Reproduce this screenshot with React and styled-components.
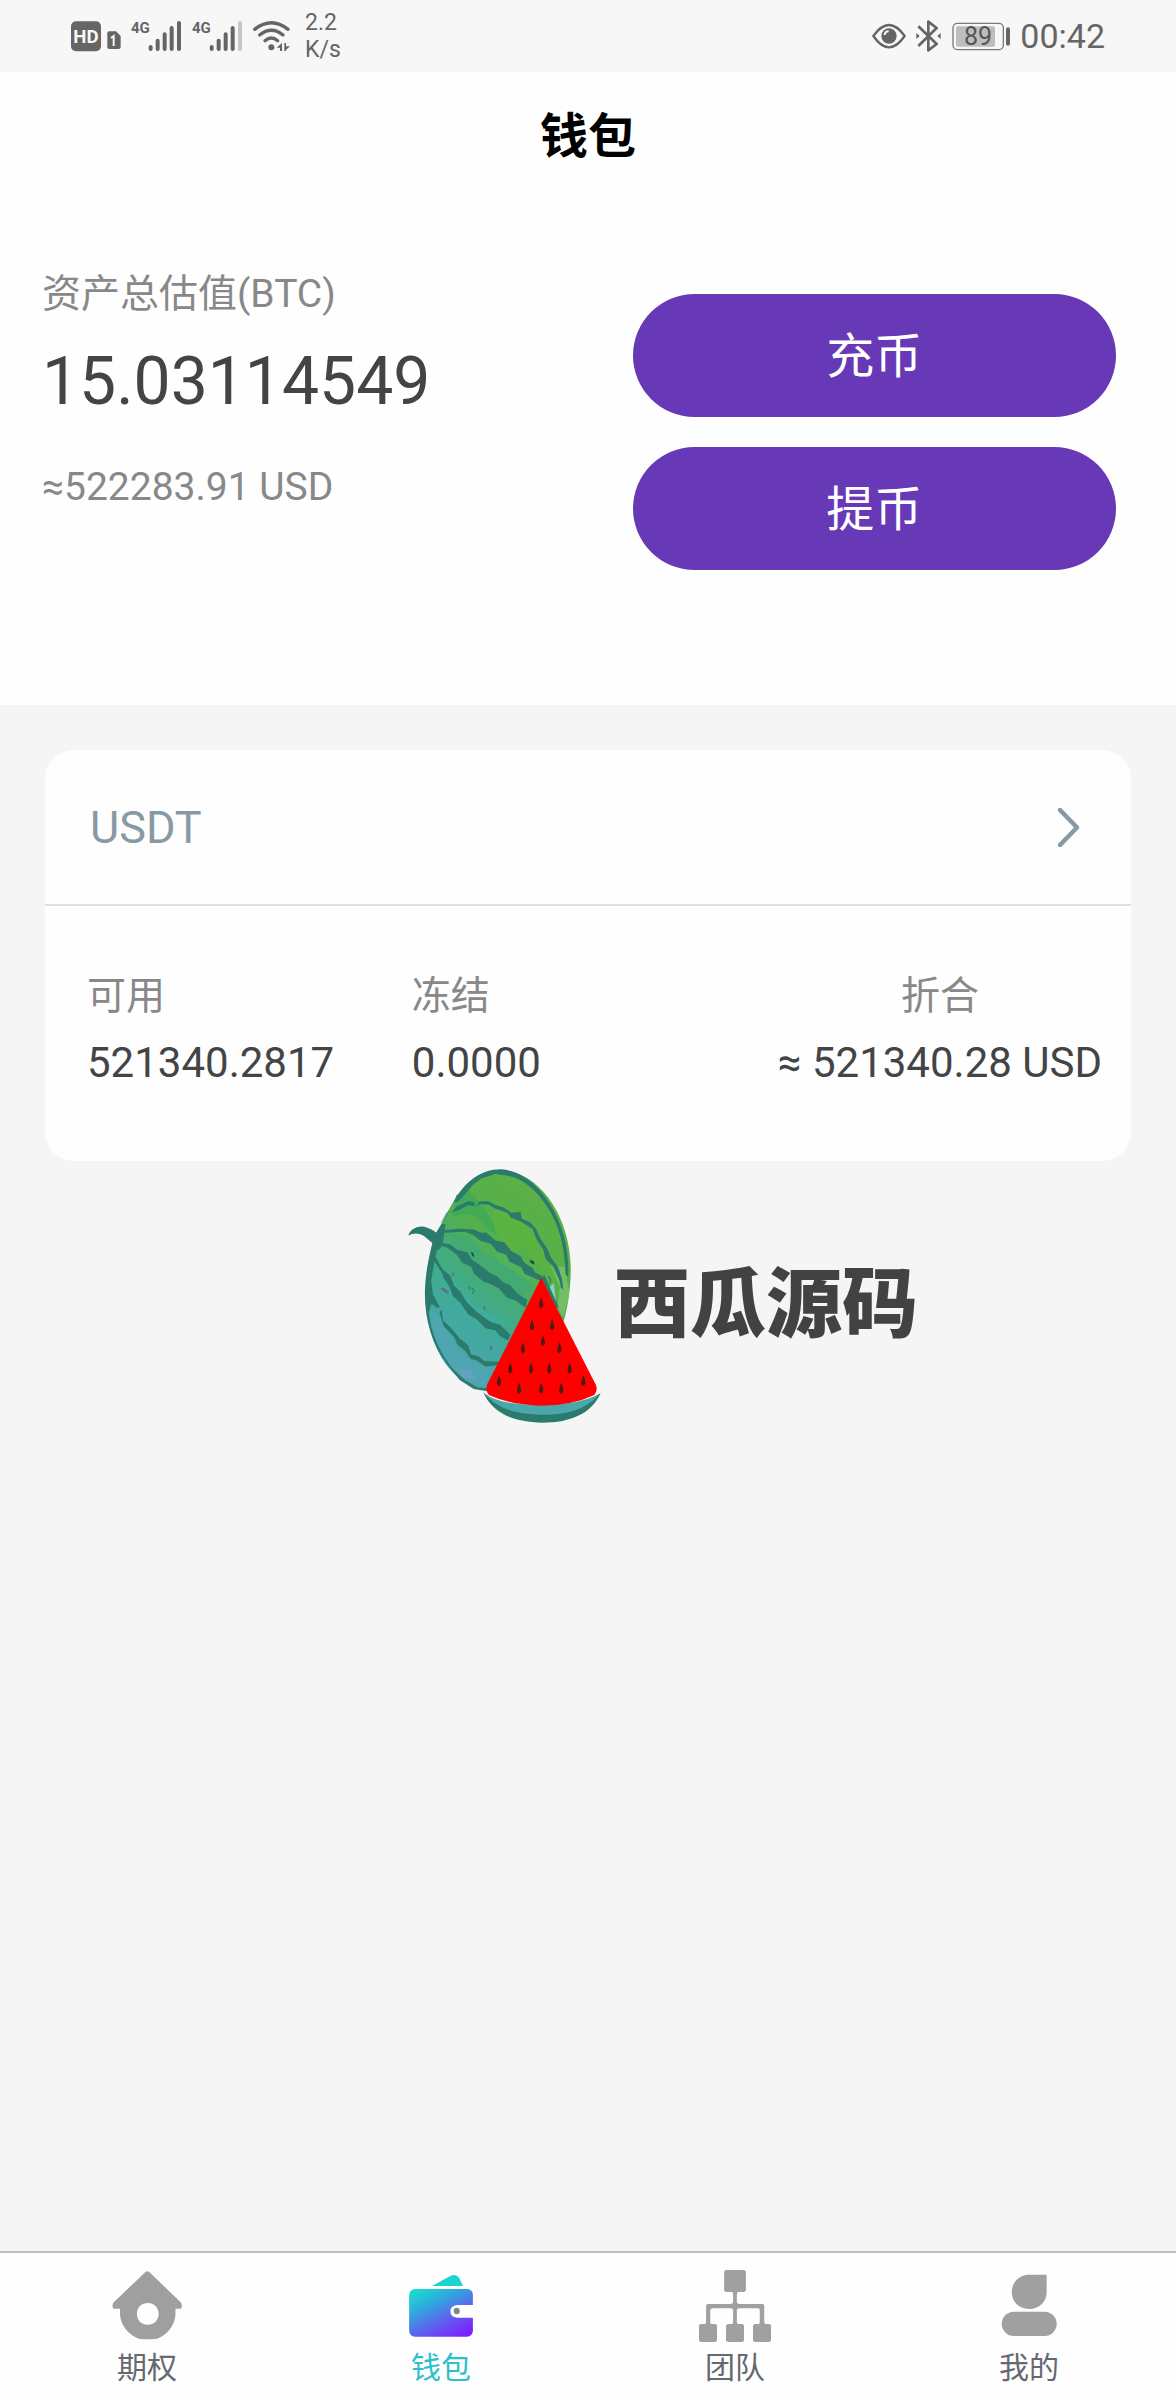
import React from "react";
import styled, { createGlobalStyle } from "styled-components";

const GlobalStyle = createGlobalStyle`
  * { box-sizing: border-box; }
  body {
    margin: 0;
    background: #f5f5f5;
    color: #434446;
    font-family: Roboto, "Noto Sans CJK SC", sans-serif;
  }
  h1, p, dl, dt, dd { margin: 0; }
  svg { display: block; flex: none; }
`;

const Page = styled.div`
  display: flex;
  flex-direction: column;
  min-height: 100vh;
`;

/* ---------- status bar ---------- */

const StatusBar = styled.div`
  display: flex;
  align-items: center;
  justify-content: space-between;
  height: 72px;
  padding: 0 71px;
  background: #f7f7f7;
  color: #656565;
`;

const StatusGroup = styled.div`
  display: flex;
  align-items: center;
  gap: ${(p) => p.$gap}px;
`;

const Speed = styled.div`
  padding-left: 5px;
  font-size: 23px;
  line-height: 27px;
`;

const Clock = styled.time`
  font-size: 34px;
  line-height: 40px;
`;

const StatusText = styled.text`
  font-family: Roboto, sans-serif;
  font-size: ${(p) => p.$size}px;
  font-weight: ${(p) => p.$weight || 400};
  text-anchor: middle;
`;

const HdIcon = () => (
  <svg width="30" height="32" viewBox="63 62 90 96" aria-label="HD">
    <rect x="63" y="66" width="90" height="90" rx="15" fill="#656565" />
    <StatusText x="108" y="131" $size="56" $weight="700" fill="#f7f7f7">HD</StatusText>
  </svg>
);

const SimIcon = () => (
  <svg width="14" height="32" viewBox="167 62 42 96" aria-label="SIM 1">
    <path d="M174 96H194L208 110V143Q208 149 202 149H174Q168 149 168 143V102Q168 96 174 96Z" fill="#656565" />
    <path d="M179 116L187 110V140" fill="none" stroke="#f7f7f7" strokeWidth="6" />
  </svg>
);

const SignalIcon = ({ weak }) => (
  <svg width="51" height="32" viewBox="244 60 153 96" aria-label="4G">
    <StatusText x="272" y="100" $size="45" $weight="700" fill="#656565">4G</StatusText>
    <g stroke="#656565" strokeWidth="12" strokeLinecap="round">
      <path d="M303 141V147M324 122V147M345 103V147M366 84V147" />
      <path d="M388 69V147" stroke={weak ? "#c6c6c6" : "#656565"} />
    </g>
  </svg>
);

const WifiIcon = () => (
  <svg width="37" height="32" viewBox="604 60 111 96" aria-label="Wi-Fi">
    <g fill="none" stroke="#656565" strokeWidth="10" strokeLinecap="round">
      <path d="M609 88Q659 49 709 88" />
      <path d="M624 105Q659 76 694 105" />
      <path d="M640 122Q659 106 678 122" />
    </g>
    <circle cx="659" cy="142" r="9" fill="#656565" />
    <path d="M675 143L691 129V153H685V143ZM698 129V153H703V150L715 139H703V129Z" fill="#656565" />
  </svg>
);

const EyeIcon = () => (
  <svg width="34" height="32" viewBox="67 60 102 96" aria-label="Eye comfort">
    <path d="M71 108Q118 42 165 108Q118 176 71 108Z" fill="none" stroke="#656565" strokeWidth="7" strokeLinejoin="round" />
    <circle cx="118" cy="108" r="23" fill="#656565" />
    <path d="M105 105Q106 94 117 94" fill="none" stroke="#f7f7f7" strokeWidth="6" />
  </svg>
);

const BluetoothIcon = () => (
  <svg width="25" height="32" viewBox="198 60 75 96" aria-label="Bluetooth">
    <path d="M205 79L260 132L235 151V65L260 84L205 138" fill="none" stroke="#656565" strokeWidth="8" strokeLinejoin="round" />
    <path d="M199 99L209 108L199 117ZM272 99L262 108L272 117Z" fill="#656565" />
  </svg>
);

const BatteryIcon = () => (
  <svg width="59" height="32" viewBox="308 60 177 96" aria-label="89%">
    <rect x="314" y="70" width="151" height="79" rx="13" fill="none" stroke="#7a7a7a" strokeWidth="4" />
    <rect x="323" y="79" width="117" height="61" rx="5" fill="#bdbdbd" />
    <path d="M479 88V131" stroke="#656565" strokeWidth="12" strokeLinecap="round" />
    <StatusText x="389" y="135" $size="75" fill="#555">89</StatusText>
  </svg>
);

/* ---------- balance summary ---------- */

const Top = styled.header`
  background: #fefefe;
`;

const Title = styled.h1`
  padding: 30px 0 28px;
  color: #000;
  font-size: 48px;
  font-weight: 700;
  line-height: 70px;
  text-align: center;
`;

const Summary = styled.section`
  display: flex;
  justify-content: space-between;
  align-items: flex-start;
  padding: 64px 60px 135px 42px;
`;

const Balance = styled.div`
  display: flex;
  flex-direction: column;
`;

const Muted = styled.p`
  color: #888;
  font-size: 39px;
  line-height: 60px;
`;

const Total = styled.p`
  padding: 18px 0 35px;
  font-size: 66px;
  line-height: 80px;
`;

const Actions = styled.div`
  display: flex;
  flex-direction: column;
  gap: 30px;
  width: 45%;
  padding-top: 30px;
`;

const PillButton = styled.button`
  height: 123px;
  padding: 0 0 8px;
  border: 0;
  border-radius: 62px;
  background: #6739b6;
  color: #fff;
  font: inherit;
  font-size: 48px;
  cursor: pointer;
`;

/* ---------- asset card ---------- */

const Content = styled.main`
  flex: 1;
  padding: 45px 45px 0;
`;

const Card = styled.section`
  overflow: hidden;
  border-radius: 29px;
  background: #fefefe;
`;

const CardLink = styled.a`
  display: flex;
  align-items: center;
  justify-content: space-between;
  height: 156px;
  padding: 0 51px 0 45px;
  border-bottom: 2px solid #e0e0e0;
  color: #8799a3;
  font-size: 45px;
  text-decoration: none;
`;

const Figures = styled.dl`
  display: grid;
  grid-template-columns: 32% 32% 1fr;
  padding: 62px 29px 70px 42px;
`;

const Figure = styled.div`
  display: flex;
  flex-direction: column;
  gap: 11px;
  justify-self: ${(p) => (p.$end ? "end" : "start")};
  text-align: ${(p) => (p.$end ? "center" : "left")};
  white-space: nowrap;
`;

const FigureLabel = styled.dt`
  color: #888;
  font-size: 39px;
  line-height: 56px;
`;

const FigureValue = styled.dd`
  font-size: 42px;
  line-height: 56px;
`;

const Chevron = () => (
  <svg width="22" height="39" viewBox="0 0 22 39" aria-hidden="true">
    <path d="M2 2L19 19.500L2 37" fill="none" stroke="#8799a3" strokeWidth="4.500" strokeLinecap="round" strokeLinejoin="round" />
  </svg>
);

/* ---------- brand ---------- */

const Brand = styled.div`
  display: flex;
  align-items: center;
  gap: 12px;
  padding: 6px 0 0 362px;
`;

const BrandName = styled.p`
  padding-top: 20px;
  color: #424242;
  font-size: 76px;
  font-weight: 900;
  line-height: 105px;
  white-space: nowrap;
`;

const seeds = [
  [432, 457], [406, 523], [463, 523], [437, 571], [380, 592], [484, 592], [344, 653],
  [403, 653], [455, 653], [513, 653], [312, 690], [552, 690], [369, 713], [432, 713], [489, 713],
];

const Watermelon = () => (
  <svg width="195" height="257" viewBox="50 50 555 770" preserveAspectRatio="none" aria-hidden="true">
    <defs>
      <linearGradient id="rind" x1="0.720" y1="0.080" x2="0.250" y2="1">
        <stop offset="0" stopColor="#5cb046" />
        <stop offset="0.320" stopColor="#54b04d" />
        <stop offset="0.500" stopColor="#43ac78" />
        <stop offset="0.700" stopColor="#40aa9c" />
        <stop offset="1" stopColor="#51a3b8" />
      </linearGradient>
      <clipPath id="melon">
        <path d="M315 58C430 60 515 205 516 350C517 480 480 600 410 680L290 720C180 715 100 590 101 420C103 250 180 58 315 58Z" />
      </clipPath>
    </defs>
    <path d="M315 60C432 62 514 205 516 350C517 480 480 600 410 680L285 718C180 712 102 590 103 420C105 300 150 210 180 158C215 92 262 59 315 60Z" fill="url(#rind)" />
    <g clipPath="url(#melon)">
      <path d="M190 135L225 120L262 160L285 200L310 255L280 238L250 200L215 190L180 200Z" fill="#43ab55" />
      <path d="M300 165L372 210L410 250L450 320L485 400L430 350L380 290L350 310L300 240Z" fill="#5bb442" />
      <path d="M168 250L225 260L270 310L340 340L410 410L372 440L300 385L240 370L190 305Z" fill="#43aa72" />
      <path d="M295 290L350 320L410 375L395 390L340 352L310 335Z" fill="#51b35b" />
      <path d="M460 345L500 350L512 430L495 500L478 470L485 410Z" fill="#74be65" />
      <path d="M455 410L468 398L475 465L458 430Z" fill="#8bd2b8" />
      <path d="M115 480L150 510L200 610L290 660L270 715L200 690L140 600Z" fill="#51a5b2" opacity="0.700" />
      <path d="M195 655L230 660L250 690L205 678Z" fill="#6b9fc6" opacity="0.700" />
      <path d="M130 350L190 390L250 470L330 510L320 550L240 520L170 440Z" fill="#3fae9e" opacity="0.800" />
    </g>
    <g fill="#2a7b6c">
      <path d="M182 158C215 92 262 56 318 57C372 60 420 100 455 158C498 230 512 310 509 378L501 372C500 290 482 215 443 160C405 101 360 75 318 74L300 70L285 77L262 84L235 106L215 132L198 152Z" />
      <path d="M54 256C56 240 72 229 92 228C112 230 125 240 133 246L149 219L160 222L153 270L145 295L135 300L125 350L119 390L124 432L144 470L135 472L120 460L112 485C118 550 145 610 185 660L215 688L250 710L278 713V722L240 715L200 688L160 635C120 580 99 500 101 420C103 360 115 310 122 278L100 258C84 247 67 247 54 256Z" />
      <path d="M175 187L192 168L225 152L241 155L243 168L225 164L202 177Z" />
      <path d="M246 168L256 153L281 152L302 164L325 171L347 187L373 184L377 205L401 216L417 235L430 266L449 294L459 320L480 350L491 385L495 417L488 412L484 390L466 348L445 326L437 296L421 272L407 235L374 213L347 203L335 187L302 175L282 163L258 161Z" />
      <path d="M157 239L200 235L240 237L261 247L276 246L302 270L328 276L346 301L373 317L383 336L407 352L415 367L431 374L440 385L426 389L384 370L375 350L341 333L333 313L306 304L289 280L260 272L238 254L215 244L158 247Z" />
      <path d="M147 276L174 282L192 298L222 306L236 329L262 347L284 366L307 378L321 394L344 405L365 430L392 448L388 472L358 449L335 442L311 413L286 400L267 393L241 370L233 349L207 337L192 313L164 291L148 287Z" />
      <path d="M131 319L151 357L173 375L184 406L202 423L218 452L244 480L271 502L290 515L315 523L344 553L338 570L315 557L302 540L274 533L249 507L224 492L202 457L181 437L169 405L155 384L147 363L127 331Z" />
      <path d="M142 485L148 477L153 510L177 534L199 562L224 584L232 611L253 617L271 632L312 633L305 645L273 648L249 630L231 625L216 601L193 582L184 559L155 528Z" />
    </g>
    <path d="M153 216L170 180M147 217L164 185" stroke="#2a7b6c" strokeWidth="1.500" fill="none" />
    <g fill="#1b4d3b">
      <path d="M232 303Q242 307 241 322Q233 315 232 303ZM399 327L412 334V343L402 337Z" />
      <path d="M451 379Q464 385 456 399" fill="none" stroke="#2a7b6c" strokeWidth="3" />
      <path d="M234 411L241 420L236 430M226 407L229 417" fill="none" stroke="#277a67" strokeWidth="3" />
    </g>
    <g fill="#5b7388">
      <ellipse cx="158" cy="420" rx="5" ry="13" transform="rotate(-55 158 420)" />
      <ellipse cx="181" cy="371" rx="3" ry="6" />
      <ellipse cx="270" cy="473" rx="3" ry="7" transform="rotate(-20 270 473)" />
      <ellipse cx="289" cy="592" rx="4" ry="7" />
    </g>
    <path d="M440 372L482 470L476 474L434 388Z" fill="#2a7b6c" />
    <path d="M267 725C302 760 358 768 434 767C505 767 563 758 601 727C577 787 518 816 434 816C350 815 292 785 267 725Z" fill="#2a7b6c" />
    <path d="M271 729C310 756 360 762 434 762C505 762 557 752 598 729C560 777 505 792 434 792C360 791 309 775 271 729Z" fill="#4ba8aa" />
    <path d="M432 382L587 702Q594 719 583 733Q520 765 432 765Q345 763 283 733Q272 719 278 702Z" fill="#fe0000" />
    <g fill="#4c1b14">
      {seeds.map(([x, y]) => (
        <path key={`${x}-${y}`} d={`M${x} ${y - 17}Q${x + 6} ${y} ${x + 6} ${y + 8}Q${x + 4} ${y + 15} ${x} ${y + 16}Q${x - 5} ${y + 15} ${x - 6} ${y + 8}Q${x - 6} ${y} ${x} ${y - 17}Z`} />
      ))}
    </g>
  </svg>
);

/* ---------- tab bar ---------- */

const TabBar = styled.nav`
  display: grid;
  grid-template-columns: repeat(4, 1fr);
  padding: 17px 0 12px;
  border-top: 2px solid #bfc1c0;
  background: #fefefe;
`;

const Tab = styled.a`
  display: flex;
  flex-direction: column;
  align-items: center;
  gap: 6px;
  color: ${(p) => (p.$active ? "#2fbfcb" : "#666870")};
  font-size: 30px;
  line-height: 40px;
  text-decoration: none;
`;

const HouseIcon = () => (
  <svg width="72" height="72" viewBox="296 90 192 216" preserveAspectRatio="none" aria-hidden="true">
    <path fill="#9f9f9f" fillRule="evenodd" d="M388 96Q393 91 398 96L483 188Q485 191 485 200Q485 206 480 206H468V222C467 255 447 284 419 296Q393 299 370 296C342 284 321 255 320 222V206H305Q300 206 300 200Q300 191 302 188ZM394 189C377 189 365 203 365 221C365 240 377 254 394 254C411 254 423 240 423 221C423 203 411 189 394 189Z" />
  </svg>
);

const WalletIcon = () => (
  <svg width="72" height="72" viewBox="1080 90 192 216" preserveAspectRatio="none" aria-hidden="true">
    <defs>
      <linearGradient id="wallet" x1="0.150" y1="0" x2="0.850" y2="1">
        <stop offset="0" stopColor="#1adbd1" />
        <stop offset="0.300" stopColor="#2ea9dd" />
        <stop offset="0.620" stopColor="#5e62ef" />
        <stop offset="1" stopColor="#7e1eff" />
      </linearGradient>
    </defs>
    <path d="M1152 138L1202 107Q1217 101 1224 113L1235 138Z" fill="#1fd3d3" />
    <path d="M1107 147H1245Q1261 149 1261 165V195H1219Q1201 197 1201 214Q1201 232 1219 233H1261V273Q1260 289 1245 290H1107Q1092 289 1091 273V165Q1092 149 1107 147Z" fill="url(#wallet)" />
    <ellipse cx="1218" cy="213" rx="8" ry="10" fill="#858585" />
  </svg>
);

const TeamIcon = () => (
  <svg width="72" height="72" viewBox="296 90 192 216" preserveAspectRatio="none" aria-hidden="true">
    <g fill="#a0a0a0">
      <rect x="363" y="90" width="58" height="66" rx="6" />
      <rect x="296" y="252" width="48" height="54" rx="6" />
      <rect x="368" y="252" width="48" height="54" rx="6" />
      <rect x="440" y="252" width="48" height="54" rx="6" />
      <path d="M384 155Q387 157 387 163V184Q387 192 380 192H319Q315 192 315 197V245Q315 251 311 253H330Q326 251 326 245V211Q327 205 332 205H380Q387 205 387 212V245Q387 251 383 253H401Q397 251 397 245V212Q397 205 404 205H453Q458 205 458 211V245Q458 251 455 253H474Q470 251 470 245V197Q470 192 465 192H404Q397 192 397 184V163Q397 157 401 155Z" />
    </g>
  </svg>
);

const ProfileIcon = () => (
  <svg width="72" height="72" viewBox="1080 90 192 216" preserveAspectRatio="none" aria-hidden="true">
    <g fill="#a0a0a0">
      <path d="M1175 104H1223V156C1223 186 1203 207 1176 207C1150 207 1130 186 1130 156C1130 128 1150 104 1175 104Z" />
      <rect x="1103" y="215" width="147" height="73" rx="33" ry="37" />
    </g>
  </svg>
);

const tabs = [
  { label: "期权", Icon: HouseIcon },
  { label: "钱包", Icon: WalletIcon, active: true },
  { label: "团队", Icon: TeamIcon },
  { label: "我的", Icon: ProfileIcon },
];

export default function App() {
  return (
    <Page lang="zh-CN">
      <GlobalStyle />
      <StatusBar>
        <StatusGroup $gap={10}>
          <StatusGroup $gap={6}>
            <HdIcon />
            <SimIcon />
          </StatusGroup>
          <SignalIcon />
          <SignalIcon weak />
          <WifiIcon />
          <Speed>
            2.2
            <br />
            K/s
          </Speed>
        </StatusGroup>
        <StatusGroup $gap={10}>
          <EyeIcon />
          <BluetoothIcon />
          <BatteryIcon />
          <Clock>00:42</Clock>
        </StatusGroup>
      </StatusBar>

      <Top>
        <Title>钱包</Title>
        <Summary>
          <Balance>
            <Muted>资产总估值(BTC)</Muted>
            <Total>15.03114549</Total>
            <Muted>≈522283.91 USD</Muted>
          </Balance>
          <Actions>
            <PillButton type="button">充币</PillButton>
            <PillButton type="button">提币</PillButton>
          </Actions>
        </Summary>
      </Top>

      <Content>
        <Card>
          <CardLink href="#usdt">
            USDT
            <Chevron />
          </CardLink>
          <Figures>
            <Figure>
              <FigureLabel>可用</FigureLabel>
              <FigureValue>521340.2817</FigureValue>
            </Figure>
            <Figure>
              <FigureLabel>冻结</FigureLabel>
              <FigureValue>0.0000</FigureValue>
            </Figure>
            <Figure $end>
              <FigureLabel>折合</FigureLabel>
              <FigureValue>≈ 521340.28 USD</FigureValue>
            </Figure>
          </Figures>
        </Card>
        <Brand>
          <Watermelon />
          <BrandName>西瓜源码</BrandName>
        </Brand>
      </Content>

      <TabBar>
        {tabs.map(({ label, Icon, active }) => (
          <Tab key={label} href={`#${label}`} $active={active} aria-current={active ? "page" : undefined}>
            <Icon />
            {label}
          </Tab>
        ))}
      </TabBar>
    </Page>
  );
}
